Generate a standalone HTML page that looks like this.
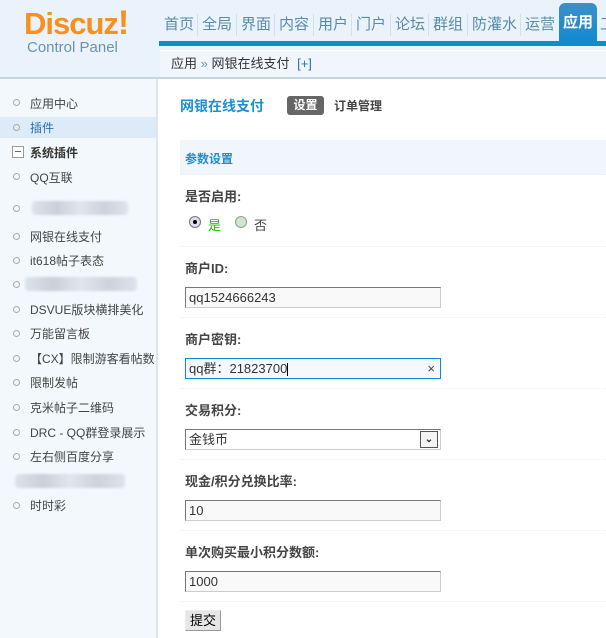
<!DOCTYPE html>
<html><head><meta charset="utf-8"><style>
*{margin:0;padding:0;box-sizing:border-box}
body{width:606px;height:638px;overflow:hidden;background:#fff;font-family:"Liberation Sans","Noto Sans CJK SC",sans-serif;font-size:12px;color:#333;position:relative}
.abs{position:absolute}
#hd{left:0;top:0;width:606px;height:78px;background:#eaf3fb}
.logo{left:24px;top:4px;font-size:31px;font-weight:bold;color:#f7901e;letter-spacing:-1px}
.cp{left:27px;top:39px;font-size:15px;color:#6b93a8}
.nav{top:12px;height:26px;font-size:15px;color:#5a8aa8;line-height:26px}
.sep{top:14px;width:1px;height:22px;background:#d2e1ec}
#bar{left:159px;top:41px;width:447px;height:5px;background:#0f8ccb}
.act{left:559px;top:3px;width:38px;height:43px;background:linear-gradient(#3d8fc9,#0d8ad0);border-radius:6px 6px 0 0;color:#fff;font-weight:bold;font-size:15px;text-align:center;line-height:40px}
#bc{left:160px;top:50px;width:446px;height:27px;background:#f0f6fc;border-top:1px solid #fff;line-height:26px;padding-left:11px;font-size:13px;color:#333}
#line{left:0;top:77px;width:606px;height:2px;background:#c5d6e0}
#sb{left:0;top:79px;width:158px;height:559px;background:#f2f8fc;border-right:2px solid #dbe7f0}
.it{position:absolute;left:30px;font-size:12px;color:#444;white-space:nowrap}
.dot{position:absolute;left:13px;width:7px;height:7px;border:1px solid #aaa;border-radius:50%}
.blur{position:absolute;height:14px;background:linear-gradient(90deg,#dde3ea,#c9d0d9,#e0e6ec,#cdd3dc,#dde3ea);border-radius:4px;filter:blur(1px)}
.lbl{position:absolute;left:185px;font-weight:bold;color:#444;font-size:13px}
.inp{position:absolute;left:185px;width:256px;height:21px;border:1px solid #ccc;border-top-color:#777;border-left-color:#777;background:#f9f9f9;padding-left:3px;line-height:19px;font-size:13px;color:#333}
.ds{position:absolute;left:180px;width:426px;border-top:1px dotted #e8f0f6}
</style></head><body>
<div id="hd" class="abs"></div>
<div class="abs logo">Discuz<span style="font-size:34px">!</span></div>
<div class="abs cp">Control Panel</div>
<div class="abs nav" style="left:164px">首页</div><div class="abs sep" style="left:197px"></div>
<div class="abs nav" style="left:202px">全局</div><div class="abs sep" style="left:236px"></div>
<div class="abs nav" style="left:241px">界面</div><div class="abs sep" style="left:274px"></div>
<div class="abs nav" style="left:279px">内容</div><div class="abs sep" style="left:313px"></div>
<div class="abs nav" style="left:318px">用户</div><div class="abs sep" style="left:351px"></div>
<div class="abs nav" style="left:356px">门户</div><div class="abs sep" style="left:390px"></div>
<div class="abs nav" style="left:395px">论坛</div><div class="abs sep" style="left:428px"></div>
<div class="abs nav" style="left:433px">群组</div><div class="abs sep" style="left:467px"></div>
<div class="abs nav" style="left:472px">防灌水</div><div class="abs sep" style="left:520px"></div>
<div class="abs nav" style="left:525px">运营</div>
<div class="abs nav" style="left:600px">工</div>
<div id="bar" class="abs"></div>
<div class="abs act">应用</div>
<div id="bc" class="abs">应用 <span style="color:#6b93a8">»</span> 网银在线支付 <span style="color:#2b6fc2;margin-left:4px">[+]</span></div>
<div id="line" class="abs"></div>
<div id="sb" class="abs">
<div class="dot" style="top:20px"></div><div class="it" style="top:16px">应用中心</div>
<div style="position:absolute;left:0;top:38px;width:156px;height:21px;background:#dcebf7"></div>
<div class="dot" style="top:45px"></div><div class="it" style="top:40px;color:#2b6fb0">插件</div>
<div style="position:absolute;left:12px;top:67px;width:12px;height:12px;border:1px solid #999;background:#fff"><div style="position:absolute;left:2px;top:4px;width:6px;height:1px;background:#666"></div></div>
<div class="it" style="top:65px;font-weight:bold;color:#333">系统插件</div>
<div class="dot" style="top:94px"></div><div class="it" style="top:90px">QQ互联</div>
<div class="dot" style="top:126px"></div><div class="blur" style="left:32px;top:122px;width:96px"></div>
<div class="dot" style="top:154px"></div><div class="it" style="top:149px">网银在线支付</div>
<div class="dot" style="top:178px"></div><div class="it" style="top:173px">it618帖子表态</div>
<div class="dot" style="top:202px"></div><div class="blur" style="left:25px;top:198px;width:112px"></div>
<div class="dot" style="top:227px"></div><div class="it" style="top:222px">DSVUE版块横排美化</div>
<div class="dot" style="top:251px"></div><div class="it" style="top:246px">万能留言板</div>
<div class="dot" style="top:276px"></div><div class="it" style="top:271px">【CX】限制游客看帖数</div>
<div class="dot" style="top:300px"></div><div class="it" style="top:295px">限制发帖</div>
<div class="dot" style="top:325px"></div><div class="it" style="top:320px">克米帖子二维码</div>
<div class="dot" style="top:350px"></div><div class="it" style="top:345px">DRC - QQ群登录展示</div>
<div class="dot" style="top:374px"></div><div class="it" style="top:369px">左右侧百度分享</div>
<div class="blur" style="left:15px;top:395px;width:110px"></div>
<div class="dot" style="top:423px"></div><div class="it" style="top:418px">时时彩</div>
</div>
<div class="abs" style="left:180px;top:96px;font-size:14px;font-weight:bold;color:#1d8fcf">网银在线支付</div>
<div class="abs" style="left:287px;top:96px;width:37px;height:19px;background:#666;border-radius:3px;color:#fff;font-weight:bold;text-align:center;line-height:19px">设置</div>
<div class="abs" style="left:334px;top:97px;font-weight:bold;color:#444">订单管理</div>
<div class="abs" style="left:180px;top:140px;width:426px;height:35px;background:#f0f6fc;border-bottom:1px dotted #e8f0f6"></div>
<div class="abs" style="left:185px;top:150px;font-weight:bold;color:#1d8fcf">参数设置</div>
<div class="lbl" style="top:186px">是否启用:</div>
<div class="abs" style="left:189px;top:216px;width:12px;height:12px;border-radius:50%;border:1px solid #777;background:#dde;"><div style="position:absolute;left:3px;top:3px;width:4px;height:4px;border-radius:50%;background:#000"></div></div>
<div class="abs" style="left:208px;top:215px;color:#0c0;font-size:13px">是</div>
<div class="abs" style="left:235px;top:216px;width:12px;height:12px;border-radius:50%;border:1px solid #999;background:#cfe6cf"></div>
<div class="abs" style="left:254px;top:215px;color:#444;font-size:13px">否</div>
<div class="ds" style="top:246px"></div>
<div class="lbl" style="top:258px">商户ID:</div>
<div class="inp" style="top:287px">qq1524666243</div>
<div class="ds" style="top:317px"></div>
<div class="lbl" style="top:329px">商户密钥:</div>
<div class="inp" style="top:358px;border:1px solid #0f8ccb;background:#f5f8fc">qq群：21823700<span style="display:inline-block;width:1px;height:13px;background:#000;vertical-align:middle"></span><span style="position:absolute;right:5px;top:0;color:#444">×</span></div>
<div class="ds" style="top:388px"></div>
<div class="lbl" style="top:400px">交易积分:</div>
<div class="inp" style="top:429px;background:#fff">金钱币<div style="position:absolute;right:2px;top:1px;width:18px;height:17px;border:1px solid #555;background:#f4f4f4;text-align:center;line-height:15px;font-size:10px;font-weight:bold">&#8964;</div></div>
<div class="ds" style="top:459px"></div>
<div class="lbl" style="top:471px">现金/积分兑换比率:</div>
<div class="inp" style="top:500px">10</div>
<div class="ds" style="top:530px"></div>
<div class="lbl" style="top:542px">单次购买最小积分数额:</div>
<div class="inp" style="top:571px">1000</div>
<div class="ds" style="top:601px"></div>
<div class="abs" style="left:185px;top:610px;width:36px;height:21px;border:1px solid #999;border-top-color:#eee;border-left-color:#eee;background:#e6e6e6;text-align:center;line-height:19px;color:#000;font-size:13px">提交</div>
</body></html>
